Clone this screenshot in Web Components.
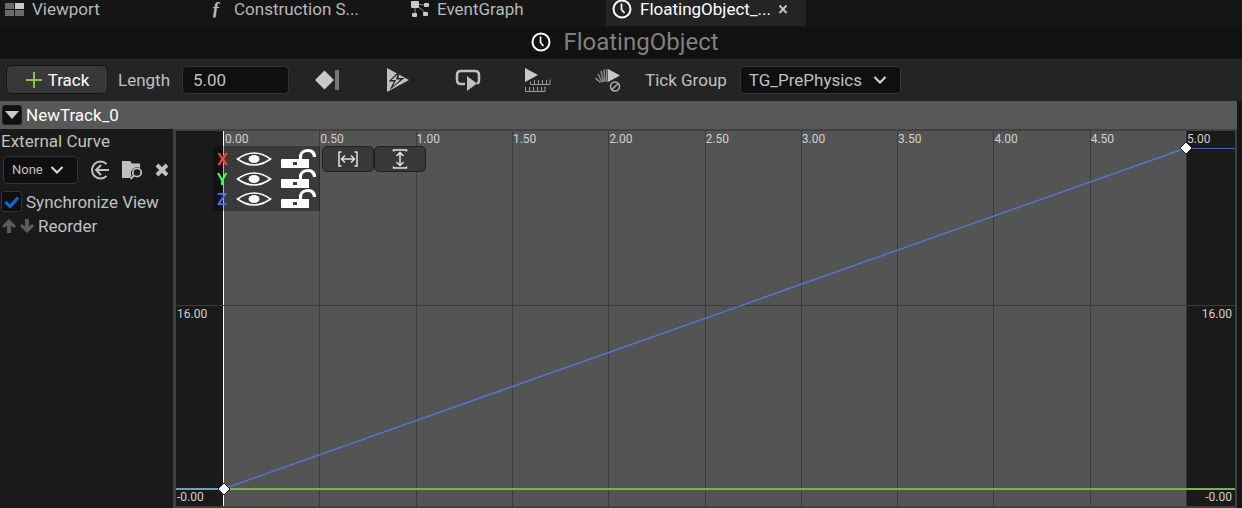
<!DOCTYPE html>
<html lang="en">
<head>
<meta charset="utf-8">
<title>FloatingObject</title>
<style>
  body { margin: 0; background: #151515; color: #c0c0c0; font: 17px/20px Roboto, "Liberation Sans", sans-serif; }
</style>
</head>
<body>
<timeline-editor></timeline-editor>

<script>
const define = (name, html, setup) => {
  const template = document.createElement('template');
  template.innerHTML = `<style>
    *, :host { box-sizing: border-box; }
    button, input, select { font: inherit; color: inherit; margin: 0; padding: 0; border: 0; background: none; }
    button, select { cursor: pointer; }
  </style>` + html;
  customElements.define(name, class extends HTMLElement {
    constructor() {
      super();
      this.attachShadow({ mode: 'open' }).append(template.content.cloneNode(true));
    }
    connectedCallback() { if (setup) setup(this, this.shadowRoot); }
  });
};

const icons = {
  viewport: [21, 20, '<g fill="#6a6a6a"><path d="M2 4h9v6H2zM2 11h9v6H2zM12 11h9v6h-9z"/></g><path fill="#c8c8c8" d="M12 4h9v6h-9z"/>'],
  graph: [20, 20, '<g transform="translate(2)"><g stroke="#8a8a8a" stroke-width="1" fill="none"><path d="M5 5l12 1.500M4 5v11M4 5l12 10"/></g><g fill="#c8c8c8"><rect x="0" y="2" width="8" height="7" rx="1"/><rect x="13" y="4" width="5" height="4" rx="1"/><rect x="1" y="14" width="5" height="4" rx="1"/><rect x="12" y="13" width="5" height="4" rx="1"/></g></g>'],
  clock: [20, 20, '<g fill="none" stroke="currentColor"><circle cx="10" cy="10" r="8.500" stroke-width="2"/><path stroke-width="1.700" d="M9.500 4.500v6l3 3.500"/></g>'],
  close: [10, 10, '<path stroke="currentColor" stroke-width="2" d="M1.500 1.500l7 7.500M8.500 1.500l-7 7.500"/>'],
  plus: [18, 18, '<path stroke="#8bc34a" stroke-width="2" d="M9 1v16M1 9h16"/>'],
  key: [26, 24, '<path fill="#c8c8c8" d="M0 12l9.500-9.500 9.500 9.500-9.500 9.500z"/><path fill="#777" d="M20 2h4v20h-4z"/>'],
  event: [26, 24, '<path fill="#c0c0c0" d="M2 0l22 12L2 24z"/><path fill="#242424" d="M14.500 2.500L3.500 13.500h5.500L4.500 22l15-12h-6z"/><path fill="#c0c0c0" d="M12.500 6.500l-6 5.500h4.500l-3 6.500 7.500-7h-4.500z"/>'],
  loop: [26, 24, '<path fill="none" stroke="#c0c0c0" stroke-width="2.500" d="M10 16H6q-4 0-4-4V7q0-4 4-4h14q4 0 4 4v5q0 3-2 3.500"/><path fill="#c0c0c0" d="M12 8l10 7.500L12 23z"/>'],
  ruler: [26, 24, '<path fill="#c8c8c8" d="M0 0l13 7L0 14z"/><g stroke="#9a9a9a" fill="none"><path d="M5.500 16.500h19.500v-5M5.500 16.500v-3M9.500 16v-4M13.500 16v-4M17.500 16v-4M21.500 16v-4M.500 19v4.500h19.500v-5M4.500 23v-4M8.500 23v-4M12.500 23v-4M16.500 23v-4"/></g>'],
  nopreview: [26, 24, '<path fill="#c8c8c8" d="M13 1l12 6.500L13 14z"/><g stroke="#888" stroke-width="1.600"><path d="M11.800 1v13M9 1.500l1 12M6 3l2.500 11M3 6l4 8M.500 10l5 4.500"/></g><g fill="none" stroke="#b0b0b0" stroke-width="1.500"><circle cx="20" cy="18.500" r="4.500"/><path d="M17 21.500l6-6"/></g>'],
  chevron: [14, 10, '<path fill="none" stroke="#d8d8d8" stroke-width="2" d="M1.500 2L7 7.500 12.500 2"/>'],
  expand: [14, 10, '<path fill="#c8c8c8" d="M0 1h14L7 9z"/>'],
  use: [20, 20, '<g fill="none" stroke="#c0c0c0" stroke-width="2"><path d="M16.500 4a8.500 8.500 0 1 0 0 12M19 10H6M11 5L6 10l5 5"/></g>'],
  browse: [21, 20, '<path fill="#c0c0c0" d="M0 1h8l2 2.500h8V8a6 6 0 0 0-8.500 7.500L8 18H0z"/><g fill="none" stroke="#c0c0c0" stroke-width="1.800"><circle cx="15" cy="12.500" r="4.200"/><path d="M12 15.500L8.500 19"/></g>'],
  clear: [14, 14, '<path stroke="#c0c0c0" stroke-width="4" d="M2 2l10 10M12 2L2 12"/>'],
  up: [14, 14, '<path fill="#5c5c5c" d="M7 0l7 7-2 2-3-2.500V14H5V6.500L2 9 0 7z"/>'],
  down: [14, 14, '<path fill="#5c5c5c" d="M7 14L0 7l2-2 3 2.500V0h4v7.500L12 5l2 2z"/>'],
  check: [16, 14, '<path fill="none" stroke="#0070e0" stroke-width="3" d="M1.500 7L6 11.500l8-9"/>'],
  eye: [36, 16, '<path fill="none" stroke="#fff" stroke-width="1.600" d="M1.500 8Q18-4 34.500 8 18 20 1.500 8z"/><ellipse cx="18" cy="8" rx="5.500" ry="4" fill="#fff"/>'],
  unlock: [36, 20, '<path fill="#fff" fill-rule="evenodd" d="M1 10h17V6q2-6 9-6 8 0 8 8h-3q-1-5-5-5-6 0-6 5v2h7v9H1q-1 0-1-1v-7q0-1 1-1zM12 13v3h4v-3z"/>'],
  fith: [20, 16, '<g fill="none" stroke="#e0e0e0" stroke-width="1.500"><path d="M3.500 1H1v14h2.500M16.500 1H19v14h-2.500M3.500 8h13M7 4.500L3.500 8 7 11.500M13 4.500L16.500 8 13 11.500"/></g>'],
  fitv: [16, 20, '<g fill="none" stroke="#e0e0e0" stroke-width="1.500"><path d="M1.500 2.500V1h13v1.500M1.500 17.500V19h13v-1.500M8 3.500v13M4.500 7L8 3.500 11.500 7M4.500 13L8 16.500l3.500-3.500"/></g>'],
  keypoint: [14, 14, '<path fill="#fff" stroke="#222" stroke-width="1" d="M7 1l6 6-6 6-6-6z"/>']
};

define('ue-icon', `<style>:host { display: inline-flex; flex: none; } svg { display: block; }</style><svg aria-hidden="true"></svg>`,
  (host, root) => {
    const [w, h, body] = icons[host.getAttribute('name')];
    const svg = root.querySelector('svg');
    svg.setAttribute('width', w);
    svg.setAttribute('height', h);
    svg.setAttribute('viewBox', `0 0 ${w} ${h}`);
    svg.innerHTML = body;
  });

define('editor-tab', `<style>
  :host { display: flex; align-items: center; width: 200px; height: 26px; padding: 0 6px 8px; color: #b8b8b8; }
  :host([active]) { background: #242424; color: #fff; }
  .tab { display: flex; align-items: center; gap: 8px; text-align: left; white-space: nowrap; }
</style>
<button class="tab"><slot name="icon"></slot><slot></slot></button><slot name="action"></slot>`);

define('tab-bar', `<style>
  :host { display: flex; gap: 3px; height: 27px; margin-left: -3px; }
  .fn { width: 20px; font: italic bold 18px/18px "Liberation Serif", serif; text-align: center; }
  .close { display: flex; margin-left: 7px; color: #c0c0c0; }
</style>
<editor-tab><ue-icon slot="icon" name="viewport"></ue-icon>Viewport</editor-tab>
<editor-tab><span slot="icon" class="fn">ƒ</span>Construction S...</editor-tab>
<editor-tab><ue-icon slot="icon" name="graph"></ue-icon>EventGraph</editor-tab>
<editor-tab active><ue-icon slot="icon" name="clock"></ue-icon>FloatingObject_...<button slot="action" class="close" aria-label="Close tab"><ue-icon name="close"></ue-icon></button></editor-tab>`);

define('timeline-title', `<style>
  :host { display: flex; justify-content: center; align-items: center; gap: 12px; height: 33px; padding: 0 0 2px 8px; background: #111; border-bottom: 1px solid #2a2a2a; color: #fff; }
  h1 { margin: 0; font-size: 24px; line-height: 28px; font-weight: 400; color: #808080; }
</style>
<ue-icon name="clock"></ue-icon><h1>FloatingObject</h1>`);

define('ue-select', `<style>
  :host { display: inline-grid; align-items: center; height: 28px; background: #0f0f0f; border: 1px solid #333; border-radius: 4px; }
  select, ue-icon { grid-area: 1 / 1; }
  select { appearance: none; width: 100%; height: 100%; padding: 0 8px; outline: 0; }
  ue-icon { justify-self: end; margin-right: 13px; pointer-events: none; }
</style>
<select></select><ue-icon name="chevron"></ue-icon>`,
  (host, root) => {
    const select = root.querySelector('select');
    select.add(new Option(host.getAttribute('value')));
    select.setAttribute('aria-label', host.getAttribute('label'));
  });

define('timeline-toolbar', `<style>
  :host { display: flex; align-items: center; height: 41px; padding: 0 7px 2px; background: #242424; }
  .add { display: flex; align-items: center; justify-content: center; gap: 5px; width: 100px; height: 27px; background: #383838; outline: 1px solid #151515; border-radius: 4px; color: #fff; }
  .length { display: flex; align-items: center; gap: 12px; margin-left: 11px; }
  input { width: 107px; height: 28px; padding: 0 10px; background: #0f0f0f; border: 1px solid #333; border-radius: 4px; }
  .tools { display: flex; gap: 44px; margin: 0 24px 0 26px; }
  .tools button { display: flex; }
  .group { display: flex; align-items: center; gap: 13px; white-space: nowrap; }
  ue-select { width: 161px; }
</style>
<button class="add"><ue-icon name="plus"></ue-icon>Track</button>
<label class="length">Length <input value="5.00"></label>
<div class="tools">
  <button aria-label="Use last keyframe"><ue-icon name="key"></ue-icon></button>
  <button aria-label="Auto play"><ue-icon name="event"></ue-icon></button>
  <button aria-label="Loop"><ue-icon name="loop"></ue-icon></button>
  <button aria-label="Replicated"><ue-icon name="ruler"></ue-icon></button>
  <button aria-label="Ignore time dilation"><ue-icon name="nopreview"></ue-icon></button>
</div>
<div class="group"><span>Tick Group</span><ue-select label="Tick Group" value="TG_PrePhysics"></ue-select></div>`);

define('track-header', `<style>
  :host { display: flex; align-items: center; gap: 4px; height: 28px; padding-left: 2px; background: #585858; color: #fff; }
  button { display: grid; place-items: center; width: 20px; height: 20px; background: #111; border: 1px solid #222; border-radius: 3px; }
</style>
<button aria-label="Collapse track"><ue-icon name="expand"></ue-icon></button><slot></slot>`);

define('track-panel', `<style>
  :host { display: block; padding: 2px 1px; background: #1a1a1a; white-space: nowrap; overflow: hidden; }
  .asset { display: flex; align-items: center; margin: 5px 0 7px 2px; }
  .asset button { display: flex; }
  ue-select { width: 75px; font-size: 13px; }
  .use, .browse, .clear { margin-left: 12px; }
  .sync { display: flex; align-items: center; gap: 4px; }
  .box { display: grid; place-items: center; width: 21px; height: 21px; }
  .box > * { grid-area: 1 / 1; }
  .box ue-icon { pointer-events: none; }
  input { appearance: none; width: 21px; height: 21px; background: #0f0f0f; border: 1px solid #333; border-radius: 3px; }
  input:not(:checked) + ue-icon { visibility: hidden; }
  .order { display: flex; align-items: center; gap: 4px; margin: 4px 0 0 1px; }
  .order button { display: flex; }
</style>
<div>External Curve</div>
<div class="asset">
  <ue-select label="External Curve" value="None"></ue-select>
  <button class="use" aria-label="Use selected asset"><ue-icon name="use"></ue-icon></button>
  <button class="browse" aria-label="Browse to asset"><ue-icon name="browse"></ue-icon></button>
  <button class="clear" aria-label="Clear"><ue-icon name="clear"></ue-icon></button>
</div>
<label class="sync"><span class="box"><input type="checkbox" checked><ue-icon name="check"></ue-icon></span>Synchronize View</label>
<div class="order"><button aria-label="Move up"><ue-icon name="up"></ue-icon></button><button aria-label="Move down"><ue-icon name="down"></ue-icon></button>Reorder</div>`);

define('curve-channel', `<style>
  :host { display: flex; align-items: center; height: 20px; font-weight: 500; }
  span { flex: none; width: 19px; }
  button { display: flex; flex: none; margin-right: 9px; }
</style>
<span><slot></slot></span>
<button aria-label="Toggle visibility"><ue-icon name="eye"></ue-icon></button>
<button aria-label="Toggle lock"><ue-icon name="unlock"></ue-icon></button>`);

define('curve-graph', `<style>
  :host { position: relative; display: grid; grid-template-columns: 47px 1fr 49px; border: solid #404040; border-width: 2px 2px 2px 3px; background: #1a1a1a; font-size: 12px; line-height: 16px; color: #d0d0d0; }
  .times { display: grid; grid-template-columns: repeat(10, 1fr); background: #545454; }
  .times span { border-left: 1px solid #3c3c3c; }
  .times span:first-child { border-color: #fff; padding-left: 1px; }
  .end { border-left: 1px solid #333; }
  .values { position: absolute; inset: 17px 0; pointer-events: none; }
  .values svg { position: absolute; left: 47px; top: 0; width: calc(100% - 96px); height: 100%; overflow: visible; }
  .level { position: absolute; left: 0; right: 0; display: flex; justify-content: space-between; padding: 0 3px 0 1px; }
  .mid { top: 46%; border-top: 1px solid #3c3c3c; }
  .zero { top: 100%; border-top: 2px solid #7fb043; margin-top: -1px; line-height: 14px; }
  .zero::before { content: ""; position: absolute; left: 0; top: -2px; width: 47px; height: 2px; background: #68a0b8; }
  .last { position: absolute; right: 0; top: 0; width: 49px; height: 1px; background: #4860c0; }
  .kp { position: absolute; transform: translate(-50%, -50%); }
  .first-key { left: 48px; top: 100%; }
  .last-key { left: calc(100% - 49px); top: 0; }
  .tools { position: absolute; left: 37px; top: 15px; display: flex; align-items: flex-start; gap: 2px; }
  .channels { width: 107px; height: 65px; padding: 3px 0 0 4px; background: rgb(0 0 0 / .3); font-size: 17px; }
  .fit { display: flex; }
  .fit button { display: grid; place-items: center; width: 52px; height: 26px; background: #383838; border: 1px solid #202020; border-radius: 5px; }
  .x { color: #ff4040; } .y { color: #40ff50; } .z { color: #5070ff; }
</style>
<div></div>
<div class="times"><span>0.00</span><span>0.50</span><span>1.00</span><span>1.50</span><span>2.00</span><span>2.50</span><span>3.00</span><span>3.50</span><span>4.00</span><span>4.50</span></div>
<div class="end">5.00</div>
<div class="values">
  <div class="level mid"><span>16.00</span><span>16.00</span></div>
  <div class="level zero"><span>-0.00</span><span>-0.00</span></div>
  <svg aria-hidden="true"><line x1="0" y1="100%" x2="100%" y2="0" stroke="#5873cf" stroke-width="1.500"/></svg>
  <div class="last"></div>
  <ue-icon class="kp first-key" name="keypoint"></ue-icon>
  <ue-icon class="kp last-key" name="keypoint"></ue-icon>
</div>
<div class="tools">
  <div class="channels">
    <curve-channel class="x">X</curve-channel><curve-channel class="y">Y</curve-channel><curve-channel class="z">Z</curve-channel>
  </div>
  <div class="fit">
    <button aria-label="Zoom to fit horizontal"><ue-icon name="fith"></ue-icon></button>
    <button aria-label="Zoom to fit vertical"><ue-icon name="fitv"></ue-icon></button>
  </div>
</div>`);

define('timeline-editor', `<style>
  :host { display: flex; flex-direction: column; min-height: 100vh; }
  .track { flex: 1; display: flex; flex-direction: column; padding-right: 5px; }
  .body { flex: 1; display: grid; grid-template-columns: 173px 1fr; min-height: 240px; }
</style>
<tab-bar></tab-bar>
<timeline-title></timeline-title>
<timeline-toolbar></timeline-toolbar>
<div class="track">
  <track-header>NewTrack_0</track-header>
  <div class="body"><track-panel></track-panel><curve-graph></curve-graph></div>
</div>`);
</script>
</body>
</html>
